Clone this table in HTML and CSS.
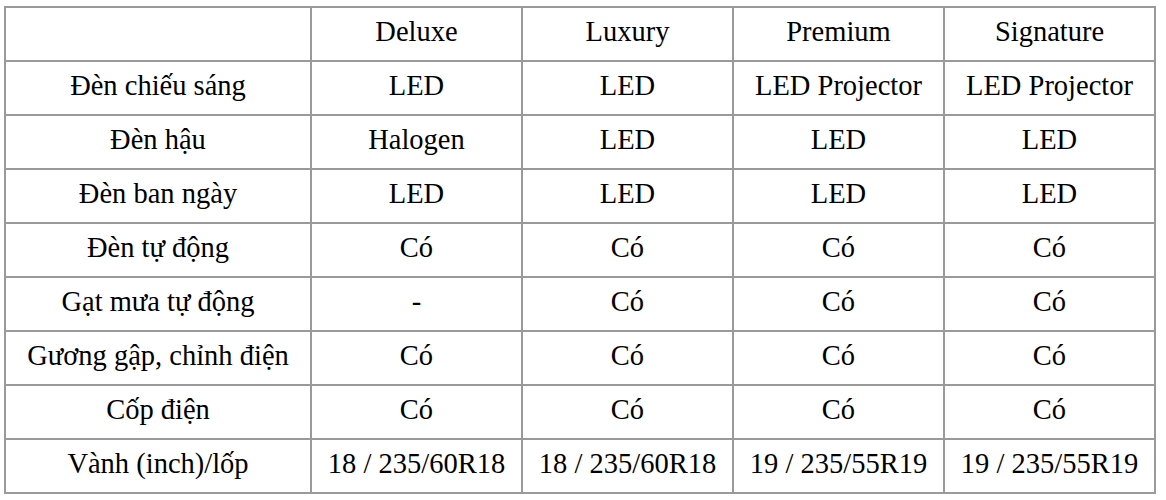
FILE: index.html
```html
<!DOCTYPE html>
<html lang="vi">
<head>
<meta charset="utf-8">
<link rel="stylesheet" href="styles.css">
</head>
<body>
<div class="wrap">
<table class="spec">
  <colgroup>
    <col class="c-label">
    <col class="c-val"><col class="c-val"><col class="c-val"><col class="c-val">
  </colgroup>
  <tr><td></td><td>Deluxe</td><td>Luxury</td><td>Premium</td><td>Signature</td></tr>
  <tr><td>Đèn chiếu sáng</td><td>LED</td><td>LED</td><td>LED Projector</td><td>LED Projector</td></tr>
  <tr><td>Đèn hậu</td><td>Halogen</td><td>LED</td><td>LED</td><td>LED</td></tr>
  <tr><td>Đèn ban ngày</td><td>LED</td><td>LED</td><td>LED</td><td>LED</td></tr>
  <tr><td>Đèn tự động</td><td>Có</td><td>Có</td><td>Có</td><td>Có</td></tr>
  <tr><td>Gạt mưa tự động</td><td>-</td><td>Có</td><td>Có</td><td>Có</td></tr>
  <tr><td>Gương gập, chỉnh điện</td><td>Có</td><td>Có</td><td>Có</td><td>Có</td></tr>
  <tr><td>Cốp điện</td><td>Có</td><td>Có</td><td>Có</td><td>Có</td></tr>
  <tr><td>Vành (inch)/lốp</td><td>18 / 235/60R18</td><td>18 / 235/60R18</td><td>19 / 235/55R19</td><td>19 / 235/55R19</td></tr>
</table>
</div>
</body>
</html>
```
FILE: styles.css
```css
html, body {
  margin: 0;
  padding: 0;
  background: #fff;
}
.wrap {
  padding: 6px 0 0 4px;
}
.spec {
  border-collapse: collapse;
  width: 1152px;
  table-layout: fixed;
  font-family: "Liberation Serif", "Times New Roman", serif;
  font-size: 28.5px;
  line-height: 34px;
  color: #000;
}
.c-label { width: 306px; }
.c-val { width: 211px; }
.spec td {
  border: 2px solid #9a9a9a;
  height: 34px;
  padding: 7px 0 11px;
  text-align: center;
  vertical-align: middle;
  white-space: nowrap;
}
```
